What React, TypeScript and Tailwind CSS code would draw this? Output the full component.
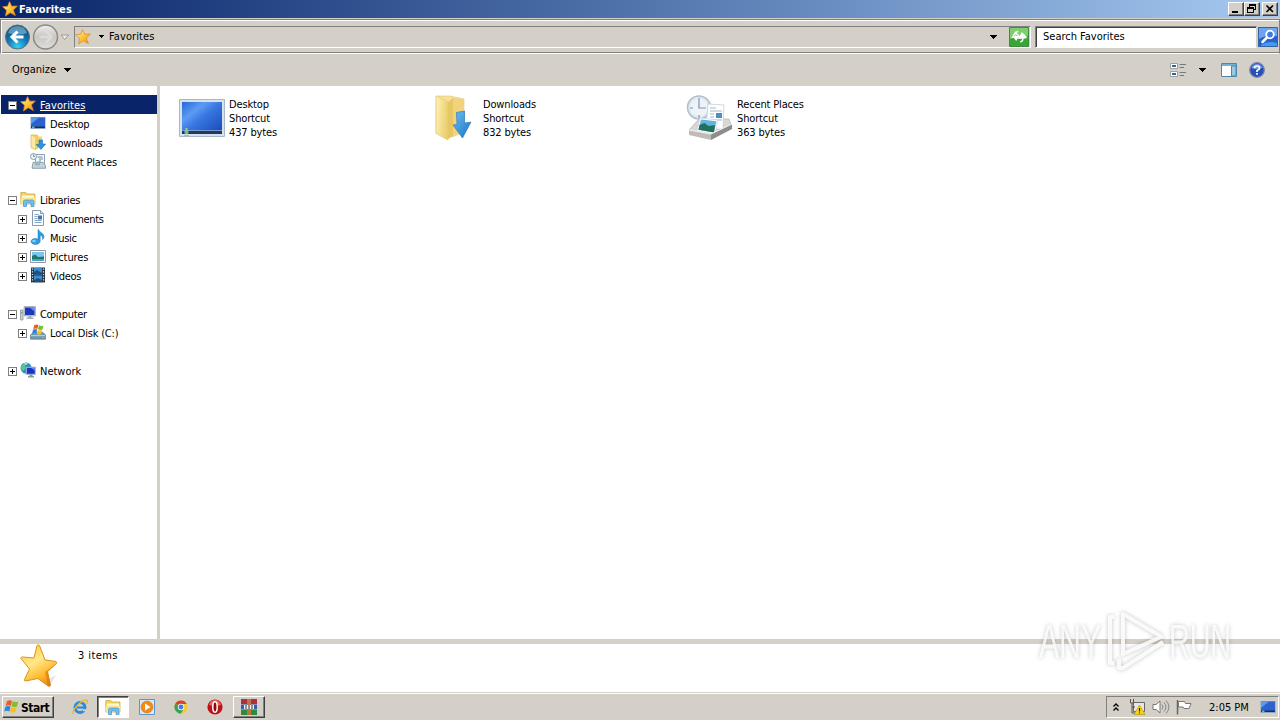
import * as React from "react";

type IconProps = { className?: string };

const Star = ({ className = "size-4" }: IconProps) => (
  <svg viewBox="0 0 16 16" className={className}>
    <defs>
      <linearGradient id="star" x1="0" y1="0" x2="1" y2="1">
        <stop offset="0" stopColor="#fff3a0" />
        <stop offset="0.5" stopColor="#fdc53a" />
        <stop offset="1" stopColor="#ee8a0c" />
      </linearGradient>
    </defs>
    <path d="M7.500.6l2.200 4.600 5.700-.2-4 4 2 5.600-5.200-2.800L3.500 15l1-5.700L.6 5.700l5-.5z" fill="url(#star)" stroke="#df861b" strokeWidth=".7" strokeLinejoin="round" />
  </svg>
);

const BigStar = () => (
  <svg viewBox="0 0 38 44" className="h-11 w-[38px]">
    <defs>
      <linearGradient id="bigstar" x1="0.2" y1="0" x2="0.7" y2="1">
        <stop offset="0" stopColor="#ffc93f" />
        <stop offset="0.4" stopColor="#ffe98a" />
        <stop offset="0.75" stopColor="#fdb92c" />
        <stop offset="1" stopColor="#e8860c" />
      </linearGradient>
    </defs>
    <path d="M27 36l9-5-5 9z" fill="#d5dde6" opacity=".7" />
    <path d="M17 1.500q1.500-1.500 2.500 0l5.500 14.500 11 1.500q1.500.8.5 2L27.500 27.500l3 13.500q-.5 2-2.500 1L18 34.500 5.500 37q-1.500 0-1-1.500L9.500 25 1 14.500Q.5 13 2.500 13L14 14z" fill="url(#bigstar)" stroke="#e08e1b" strokeWidth="1" />
    <path d="M36.500 19.500l-9 8L30.500 41q-.5 2-2.500 1l-3-14z" fill="#d9790c" opacity=".6" />
  </svg>
);

const Screen = ({ className = "size-4" }: IconProps) => (
  <svg viewBox="0 0 16 16" className={className}>
    <path d="M.5 2h15v12H.5z" fill="#8fa5c8" />
    <path d="M1 2.500h14V12H1z" fill="#2b62cf" />
    <path d="M1 2.500h8L1 9z" fill="#5f9aef" />
    <path d="M1 11.500h14V13H1z" fill="#163065" />
    <path d="M2 11.500h2.500V13H2z" fill="#63c66b" />
  </svg>
);

const BigScreen = () => (
  <svg viewBox="0 0 48 42" className="h-[42px] w-12">
    <defs>
      <linearGradient id="screen" x1="0" y1="0" x2="1" y2="1">
        <stop offset="0" stopColor="#2867d6" />
        <stop offset="0.3" stopColor="#5c9bf3" />
        <stop offset="0.5" stopColor="#3777e0" />
        <stop offset="1" stopColor="#1647b5" />
      </linearGradient>
    </defs>
    <path d="M1.500 2.500h45v37h-45z" fill="#d7e1ec" stroke="#a8b8ca" />
    <path d="M4 5h40v32H4z" fill="url(#screen)" />
    <path d="M4 33.500h40V37H4z" fill="#26375c" />
    <path d="M4 33h40v.8H4z" fill="#93b5e6" />
    <circle cx="8.500" cy="35" r="2.200" fill="#74b98a" />
    <path d="M7.500 31h2v3h-2zM6 38h5v1H6z" fill="#8fd08b" />
  </svg>
);

const Downloads = () => (
  <svg viewBox="0 0 16 16" className="size-4">
    <path d="M1 1h6l1 1.500V14l-3 1.500-4-2z" fill="#f1cf65" stroke="#d9b24a" strokeWidth=".7" />
    <path d="M1.500 1.500L5 3.500V15l-3.500-2z" fill="#fbeaa1" />
    <path d="M8 2.500h4V10H8z" fill="#f3d777" />
    <path d="M9 6h3.500v4h3L11 15.500 6.200 10.500H9z" fill="#2c93de" stroke="#1a6cae" strokeWidth=".6" />
  </svg>
);

const BigDownloads = () => (
  <svg viewBox="0 0 40 48" className="ml-px h-12 w-10">
    <defs>
      <linearGradient id="folder" x1="0" y1="0" x2="1" y2="0.3">
        <stop offset="0" stopColor="#fdf2b8" />
        <stop offset="1" stopColor="#ecd070" />
      </linearGradient>
      <linearGradient id="arrow" x1="0" y1="0" x2="1" y2="1">
        <stop offset="0" stopColor="#6fc0f2" />
        <stop offset="1" stopColor="#1673c8" />
      </linearGradient>
    </defs>
    <path d="M3 2h14l14 3v33l-12 5-16-4z" fill="#f6e198" stroke="#dfc470" strokeWidth=".6" />
    <path d="M20 4l11 1.500v32l-11 4z" fill="#f0d37a" />
    <path d="M3 2l12 6v38L3 39.500z" fill="url(#folder)" stroke="#e0c671" strokeWidth=".6" />
    <path d="M15 8l5-4v38l-5 3z" fill="#e7c763" />
    <path d="M23.500 18.500l8-1.500v12l6.500-1-8.500 16L20 31l4-.6z" fill="url(#arrow)" stroke="#2a80c6" strokeWidth=".7" />
  </svg>
);

const Recent = () => (
  <svg viewBox="0 0 16 16" className="size-4">
    <path d="M5.500 1.500h9v10h-9z" fill="#f4f8fb" stroke="#8ea0b0" />
    <path d="M7.500 4h5M9 6h4M9 8h2" stroke="#71899f" />
    <circle cx="3.500" cy="3.500" r="3" fill="#eef4f9" stroke="#8698a8" />
    <path d="M3.500 1.500v2H5" fill="none" stroke="#5c7389" strokeWidth=".8" />
    <path d="M3 9.500h10l2.500 3v2.800H2z" fill="#c8d1d8" stroke="#7f8f9b" strokeWidth=".8" />
    <path d="M5 8.500h5v4H5z" fill="#8fb8d0" />
  </svg>
);

const BigRecent = () => (
  <svg viewBox="0 0 48 48" className="size-12">
    <path d="M3 36L13 25h30l3 8-21 11z" fill="#d8d7d4" stroke="#a9a8a5" strokeWidth=".6" />
    <circle cx="13" cy="13.500" r="11.500" fill="#dfe8f1" stroke="#b4bec8" strokeWidth="1.500" />
    <circle cx="13" cy="13.500" r="9" fill="#edf3f8" />
    <path d="M13 4v10h7M4 14h3M13 24v-3" fill="none" stroke="#8193a8" strokeWidth="1.200" />
    <path d="M22 10l16 1-1 24H20z" fill="#fff" stroke="#c0c6cb" strokeWidth=".7" />
    <path d="M24 14h6M24 17h12M24 20h4M24 23h4M24 26h12" stroke="#a3b4c6" />
    <path d="M30 19h6v5h-6z" fill="#4b8fc9" />
    <path d="M14 24l18 2-3 14-18-3z" fill="#fff" stroke="#c7d2da" strokeWidth=".6" />
    <path d="M15 25.500l15.500 1.700L28 38.500l-15.500-2.700z" fill="#64b4e4" />
    <path d="M13.500 31l5-2 4 3 6.500-1L28 38.500l-15.500-2.700z" fill="#22705c" />
    <path d="M3 36l22 4v6L3 41z" fill="#bdbcb8" />
    <path d="M25 40l21-10v5L25 46z" fill="#8e8d8a" />
    <path d="M3 36l22 4 21-10" fill="none" stroke="#f5f5f3" />
  </svg>
);

const Libraries = () => (
  <svg viewBox="0 0 16 16" className="size-4">
    <path d="M.8 3V1.500h5L7 3h8v10H.8z" fill="#f1d35e" stroke="#c7a43d" strokeWidth=".7" />
    <path d="M2 4.500h12V8H2z" fill="#fff9d6" />
    <path d="M.8 6.500h14.500V13H.8z" fill="#fae792" />
    <path d="M3.500 15.500v-5q0-1.500 1.500-1.500h7.500q1.500 0 1.500 1.500v5h-3V12H6.500v3.500z" fill="#74bde8" stroke="#4293c9" strokeWidth=".7" />
  </svg>
);

const Document = () => (
  <svg viewBox="0 0 16 16" className="size-4">
    <path d="M2.500.5h8l3 3v12h-11z" fill="#fbfdff" stroke="#8799ab" />
    <path d="M10.500.5v3h3" fill="#d8e4ef" stroke="#8799ab" />
    <path d="M4.500 4.500h4M4.500 6.500h3M4.500 8.500h3M4.500 10.500h7M4.500 12.500h7" stroke="#8aa6c3" />
    <path d="M8 5.500h4v4H8z" fill="#3b79b8" />
  </svg>
);

const Music = () => (
  <svg viewBox="0 0 16 16" className="size-4">
    <path d="M8.500.5c.5 3 5.500 3.500 5.500 7 0 1.500-.8 2.500-1.500 3 .3-2.500-.5-3.700-2.300-4.200V12c0 2-2 3.500-4.500 3.500S1 14.200 1 12.500 3 9.500 5 9.500c1 0 2 .2 3 .5V.5z" fill="#2d9de2" stroke="#1b75b4" strokeWidth=".5" />
    <ellipse cx="4" cy="12" rx="1.800" ry="1.200" fill="#85cff5" />
  </svg>
);

const Picture = () => (
  <svg viewBox="0 0 16 16" className="size-4">
    <path d="M.5 2.500h15v12H.5z" fill="#fff" stroke="#8e9aa6" />
    <path d="M2 4h12v9H2z" fill="#7cc6ee" />
    <path d="M2 8l3-1.500L8 9l6-.5V13H2z" fill="#1f7868" />
    <path d="M2 11h12v2H2z" fill="#4aa0c9" />
  </svg>
);

const Video = () => (
  <svg viewBox="0 0 16 16" className="size-4">
    <path d="M1 .5h14v15H1z" fill="#283545" />
    <path d="M4 1h8v6.500H4zM4 8.500h8V15H4z" fill="#3a8fd0" />
    <path d="M4 5l3-2 5 3v1.500H4zM4 13l4-2 4 2v2H4z" fill="#1c5187" />
    <path d="M2.500 1.500v14M13.500 1.500v14" stroke="#d8e4ee" strokeWidth="1.200" strokeDasharray="1.200 1.500" />
  </svg>
);

const Computer = () => (
  <svg viewBox="0 0 16 16" className="size-4">
    <path d="M.5 5h2.500v10H.5z" fill="#cdd3d8" stroke="#7f8a94" strokeWidth=".7" />
    <path d="M1 7h1.500v1.500H1z" fill="#69b845" />
    <path d="M4 1.500h11.500v9.500H4z" fill="#c4cbd8" stroke="#8d96a8" strokeWidth=".6" />
    <path d="M5 2.500h9.500V10H5z" fill="#1c36c0" />
    <path d="M9.500 2.500h5v4z" fill="#6e8df0" />
    <path d="M8.500 11h3v1.500h2V14h-7v-1.500h2z" fill="#a5aeb9" />
  </svg>
);

const WinFlag = () => (
  <>
    <path d="M3.500 1.800C5 .8 6.500.8 8 1.600L6.900 6C5.500 5.200 4 5.200 2.400 6.100z" fill="#f05a28" />
    <path d="M8.600 1.900c1.700.9 3.200 1 5 .2L12.400 6.500c-1.700.8-3.300.6-4.900-.2z" fill="#7fbf2f" />
    <path d="M2.200 6.800c1.600-.9 3-.9 4.500-.1L5.600 11c-1.500-.8-3-.8-4.500.1z" fill="#2a86dc" />
    <path d="M7.300 7c1.600.8 3.200.9 4.900.2L11 11.500c-1.600.8-3.100.7-4.800-.2z" fill="#fbbf1f" />
  </>
);

const Disk = () => (
  <svg viewBox="0 0 16 16" className="size-4">
    <path d="M.5 11L3 8.500h10l2.500 2.500v4.200H.5z" fill="#6f9aae" stroke="#5a7e92" strokeWidth=".7" />
    <path d="M1 11h14v1.200H1z" fill="#b3cedb" />
    <path d="M12.500 13h1.500v1h-1.500z" fill="#74e75a" />
    <g transform="translate(1 -.5) scale(.92)">
      <WinFlag />
    </g>
  </svg>
);

const Network = () => (
  <svg viewBox="0 0 16 16" className="size-4">
    <circle cx="6" cy="6" r="5.500" fill="#2a8fd2" />
    <path d="M2 3c2-2 4-2.500 5-2L5 4l1 2-3 3C1 8 .3 5 2 3z" fill="#59c48c" />
    <path d="M4 1.500Q6 .5 8 1.500L6 3z" fill="#bdebf5" />
    <path d="M6 5h9.500v7.500H6z" fill="#c0cce3" stroke="#7e90b2" strokeWidth=".5" />
    <path d="M6.800 5.800h8v6h-8z" fill="#1734c4" />
    <path d="M11 5.800h3.800v3z" fill="#6887f0" />
    <path d="M9.500 12.500h3V14h1.500v1.500H8V14h1.500z" fill="#8998ad" />
  </svg>
);

const Triangle = () => (
  <svg viewBox="0 0 8 4" className="h-1 w-2" shapeRendering="crispEdges">
    <path d="M0 0h8L4 4z" fill="#000" />
  </svg>
);

const Expander = ({ open }: { open?: boolean }) => (
  <svg viewBox="0 0 9 9" className="size-[9px] shrink-0" shapeRendering="crispEdges">
    <path d="M.5.5h8v8h-8z" fill="#fff" stroke="#808080" />
    <path d={open ? "M2 4.500h5" : "M2 4.500h5M4.500 2v5"} stroke="#000" />
  </svg>
);

type Row = {
  label?: string;
  icon?: React.ReactNode;
  child?: boolean;
  expand?: "open" | "closed";
  selected?: boolean;
  tracking?: string;
};

const rows: Row[] = [
  { label: "Favorites", icon: <Star />, expand: "open", selected: true, tracking: "tracking-[0.1px]" },
  { label: "Desktop", icon: <Screen />, child: true, tracking: "tracking-[-0.2px]" },
  { label: "Downloads", icon: <Downloads />, child: true, tracking: "tracking-[-0.2px]" },
  { label: "Recent Places", icon: <Recent />, child: true, tracking: "tracking-[-0.13px]" },
  {},
  { label: "Libraries", icon: <Libraries />, expand: "open" },
  { label: "Documents", icon: <Document />, child: true, expand: "closed" },
  { label: "Music", icon: <Music />, child: true, expand: "closed" },
  { label: "Pictures", icon: <Picture />, child: true, expand: "closed", tracking: "tracking-[-0.1px]" },
  { label: "Videos", icon: <Video />, child: true, expand: "closed" },
  {},
  { label: "Computer", icon: <Computer />, expand: "open" },
  { label: "Local Disk (C:)", icon: <Disk />, child: true, expand: "closed", tracking: "tracking-[-0.18px]" },
  {},
  { label: "Network", icon: <Network />, expand: "closed", tracking: "tracking-normal" },
];

const files = [
  { name: "Desktop", size: "437 bytes", icon: <BigScreen /> },
  { name: "Downloads", size: "832 bytes", icon: <BigDownloads /> },
  { name: "Recent Places", size: "363 bytes", icon: <BigRecent /> },
];

const raised = "border border-t-white border-l-white border-r-[#404040] border-b-[#404040] shadow-[inset_-1px_-1px_0_#808080] bg-[#d4d0c8]";

function TitleBar() {
  return (
    <header className="flex h-[18px] items-center bg-linear-to-r from-[#0a246a] to-[#a6caf0] pl-0.5 pr-0.5 text-white">
      <Star />
      <span className="ml-px flex-1 pt-0.5 text-[11px] font-bold tracking-[0.15px]">Favorites</span>
      <div className="flex">
        <button className={"flex h-3.5 w-4 items-center justify-center " + raised}>
          <svg viewBox="0 0 16 14" className="h-3.5 w-4 shrink-0" shapeRendering="crispEdges"><path d="M4 9h6v2H4z" /></svg>
        </button>
        <button className={"flex h-3.5 w-4 items-center justify-center " + raised}>
          <svg viewBox="0 0 16 14" className="h-3.5 w-4 shrink-0" shapeRendering="crispEdges">
            <path d="M5.500 5V2.500h6v5H10M5 3.500h7M3.500 5.500h6v5h-6zM3 6.500h7" fill="none" stroke="#000" />
          </svg>
        </button>
        <button className={"ml-0.5 flex h-3.5 w-4 items-center justify-center " + raised}>
          <svg viewBox="0 0 16 14" className="h-3.5 w-4 shrink-0"><path d="M4.500 3.500l6.500 6.500M11 3.500L4.500 10" stroke="#000" strokeWidth="1.600" /></svg>
        </button>
      </div>
    </header>
  );
}

function NavBar() {
  return (
    <div className="mt-px flex h-[35px] items-center border border-[#808080] border-b-white pl-1 pr-px shadow-[inset_1px_1px_0_#fff,inset_0_-1px_0_#808080]">
      <svg viewBox="0 0 64 28" className="h-7 w-16">
        <defs>
          <radialGradient id="back" cx=".5" cy=".9" r=".9">
            <stop offset="0" stopColor="#35d0f5" />
            <stop offset=".45" stopColor="#167cba" />
            <stop offset="1" stopColor="#0b466f" />
          </radialGradient>
          <linearGradient id="fwd" x1="0" y1="0" x2="0" y2="1">
            <stop offset="0" stopColor="#eeeeed" />
            <stop offset=".5" stopColor="#c8c6c3" />
            <stop offset="1" stopColor="#e2e0dd" />
          </linearGradient>
        </defs>
        <circle cx="12.500" cy="14" r="12" fill="url(#back)" stroke="#54738a" />
        <path d="M3 10q2-7 9.500-7T22 10q-9 3-19 0z" fill="#a8d3e8" opacity=".5" />
        <path d="M18.500 14H8M12.500 8.500L7 14l5.500 5.500" fill="none" stroke="#fff" strokeWidth="3" />
        <circle cx="40.500" cy="14" r="12" fill="url(#fwd)" stroke="#8c8a87" strokeWidth="1.500" />
        <path d="M34.500 14H45M41 8.500l5.500 5.500-5.500 5.500" fill="none" stroke="#dddbd8" strokeWidth="2.500" />
        <path d="M56 12h7.500L59.800 16.500z" fill="#eee" stroke="#8a8885" strokeWidth=".8" />
      </svg>
      <div className="ml-[5px] flex h-[22px] w-[957px] items-center border border-[#808080] border-b-white border-r-white pr-[33px]">
        <Star />
        <svg viewBox="0 0 6 3" className="ml-[7px] h-[3px] w-1.5" shapeRendering="crispEdges"><path d="M0 0h6L3 3z" /></svg>
        <span className="ml-[5px] flex-1 pt-px tracking-[0.1px]">Favorites</span>
        <Triangle />
      </div>
      <svg viewBox="0 0 20 20" className="-ml-[22px] size-5">
        <path d="M.5.500h19v19H.5z" fill="#36a635" stroke="#468a48" />
        <path d="M1 1h18v8Q10 6 1 12z" fill="#7bcf6c" />
        <path d="M7 13V8M3.500 9.500L7 5l3.500 4.500zM7 7q0-2.500 3-2.500M13.500 7v5M10 11h7l-3.500-4.500zM13.500 12q0 3-3 3" fill="none" stroke="#fff" strokeWidth="1.400" transform="rotate(-8 10 10)" />
        <path d="M3 9l4 4.500L11 9zM9.500 11.500l4-4.500 4 4.500z" fill="#fff" />
      </svg>
      <div className="ml-[6px] flex h-[22px] flex-1 items-center border border-[#808080] border-b-white border-r-[#d4d0c8] bg-white pl-[7px] shadow-[inset_1px_1px_0_#404040]">
        <span className="pt-px tracking-normal">Search Favorites</span>
      </div>
      <svg viewBox="0 0 20 20" className="ml-px size-5">
        <path d="M.5.500h19v19H.5z" fill="#2860d4" stroke="#3561ad" />
        <path d="M1 1h18v8Q8 8 1 12z" fill="#6ca4f2" />
        <path d="M3 18Q10 13 19 16v3H3z" fill="#47b8f0" opacity=".7" />
        <circle cx="12" cy="7.500" r="3.800" fill="#4179de" stroke="#fff" strokeWidth="1.800" />
        <path d="M9 10.500L4.500 15" stroke="#fff" strokeWidth="2.500" strokeLinecap="round" />
      </svg>
    </div>
  );
}

function CommandBar() {
  return (
    <div className="flex h-[31px] items-center pb-px pl-3 pr-[15px]">
      <span className="w-[51px] tracking-[-0.05px]">Organize</span>
      <Triangle />
      <svg viewBox="0 0 16 16" className="ml-auto size-4">
        <path d="M.5 1.500h7v5h-7zM.5 9.500h7v5h-7z" fill="#fff" stroke="#9aa1a8" />
        <path d="M2 3h4v2H2zM2 11h4v2H2z" fill="#38648d" />
        <path d="M9.500 2.500H16M9.500 5.500H14M9.500 10.500H16M9.500 13.500H14" stroke="#737b82" />
      </svg>
      <span className="ml-3"><Triangle /></span>
      <svg viewBox="0 0 16 14" className="ml-[15px] h-3.5 w-4">
        <path d="M.5.500h15v13H.5z" fill="#fff" stroke="#4d88ac" />
        <path d="M1 1h14v2H1z" fill="#76b1d1" />
        <path d="M10.500 3h4.500v10h-4.500z" fill="#9acbe3" stroke="#4d88ac" />
      </svg>
      <svg viewBox="0 0 16 16" className="ml-3 size-4">
        <circle cx="8" cy="8" r="7.300" fill="#2850b8" stroke="#7385b2" strokeWidth="1.200" />
        <path d="M2.500 6Q4 2 8 2t5.500 4Q8 8 2.500 6z" fill="#7499e5" />
        <path d="M5.500 6.200Q5.500 4 8 4t2.500 2.200Q10.500 7.500 8 8.500V10M8 11v1.800" fill="none" stroke="#fff" strokeWidth="1.700" />
      </svg>
    </div>
  );
}

function Sidebar() {
  return (
    <nav className="w-[157px] bg-white pt-[9px]">
      {rows.map((row, i) => (
        <div key={i} className={"ml-px flex h-[19px] items-center pt-0.5 " + (row.selected ? "bg-[#0a246a] text-white" : "")}>
          {row.label && (
            <>
              <span className={"flex shrink-0 " + (row.child ? "w-[29px] pl-[17px]" : "w-[19px] pl-[7px]")}>
                {row.expand && <Expander open={row.expand === "open"} />}
              </span>
              <span className="-mt-1">{row.icon}</span>
              <span className={"ml-1 " + (row.tracking || "") + (row.selected ? " underline underline-offset-1" : "")}>{row.label}</span>
            </>
          )}
        </div>
      ))}
    </nav>
  );
}

function Watermark() {
  return (
    <svg viewBox="0 0 210 76" className="pointer-events-none absolute left-[1030px] top-[602px] h-[76px] w-[210px] drop-shadow-[0_0_2px_rgba(0,0,0,0.28)]">
      <g fill="#fff" fillOpacity=".8" fontFamily="Liberation Sans" fontSize="48">
        <text x="9" y="56" textLength="62" lengthAdjust="spacingAndGlyphs">ANY</text>
        <text x="139" y="56" textLength="62" lengthAdjust="spacingAndGlyphs">RUN</text>
      </g>
      <path d="M84 15h-4v46h4M93 50V12l39 23M93 12v40l40-18M89 57v9h4l40-26" fill="none" stroke="#fff" strokeOpacity=".85" strokeWidth="4" strokeLinejoin="round" />
    </svg>
  );
}

function Taskbar() {
  return (
    <footer className="flex h-[27px] items-center border-t border-white pl-0.5">
      <button className={"flex h-[22px] w-[52px] items-center " + raised}>
        <svg viewBox="0 0 16 14" className="h-4 w-[18px] shrink-0"><WinFlag /></svg>
        <span className="pt-px text-[12px] font-bold leading-none tracking-[-0.5px]">Start</span>
      </button>
      <svg viewBox="0 0 16 16" className="ml-[18px] size-4">
        <circle cx="8" cy="8.500" r="5" fill="none" stroke="#2a8bdb" strokeWidth="3" />
        <path d="M5 8.500h8" stroke="#2a8bdb" strokeWidth="2.200" />
        <path d="M11 10.200h4v2h-4z" fill="#d4d0c8" />
        <path d="M1.500 15C-1 12 9 1 14 1q2.500.5.500 4" fill="none" stroke="#efb72b" strokeWidth="1.400" />
      </svg>
      <div className="ml-[9px] flex h-[22px] w-8 items-center justify-center border border-[#404040] border-b-white border-r-white bg-white shadow-[inset_1px_1px_0_#808080]">
        <Libraries />
      </div>
      <svg viewBox="0 0 16 16" className="ml-[10px] size-4">
        <path d="M.5.500h15v15H.5z" fill="#d8eaf6" stroke="#5b98c9" />
        <circle cx="8" cy="8" r="6" fill="#f28a19" stroke="#cf6a0d" strokeWidth=".5" />
        <path d="M6 4.500l5.500 3.500L6 11.500z" fill="#fff" />
      </svg>
      <svg viewBox="0 0 16 16" className="ml-[19px] size-3.5">
        <circle cx="8" cy="8" r="7.500" fill="#fbc92f" />
        <path d="M8 8L1.500 4.300A7.500 7.500 0 0 1 14.500 4.500H8z" fill="#df3e31" />
        <path d="M1.500 4.300A7.500 7.500 0 0 0 8 15.500l3-5.500L8 8z" fill="#35a252" />
        <circle cx="8" cy="8" r="3.700" fill="#f5f5f5" />
        <circle cx="8" cy="8" r="2.800" fill="#3b7ded" />
      </svg>
      <svg viewBox="0 0 16 16" className="ml-[19px] size-4">
        <circle cx="8" cy="8" r="7.600" fill="#bd1218" />
        <path d="M2 6Q3.500 1 8 1t6 5Q8 8 2 6z" fill="#e76361" />
        <ellipse cx="8" cy="8" rx="2.200" ry="5.200" fill="#8e080d" stroke="#fff" strokeWidth="1.500" />
      </svg>
      <div className={"ml-[10px] flex h-[22px] w-8 items-center justify-center " + raised}>
        <svg viewBox="0 0 16 16" className="size-4">
          <path d="M0 0h16v5H0z" fill="#b02f3c" />
          <path d="M0 5.500h16v5H0z" fill="#3958b8" />
          <path d="M0 11h16v5H0z" fill="#2e8b3b" />
          <path d="M6 0h4v16H6z" fill="#bd7541" />
          <path d="M3 6h10v4H3z" fill="#eee" />
          <path d="M5 6v4M8 6v4M11 6v4" stroke="#333" />
        </svg>
      </div>
      <div className="ml-auto mr-px flex h-[22px] w-[173px] items-center border border-[#808080] border-b-white border-r-white pl-1.5">
        <svg viewBox="0 0 6 9" className="h-[9px] w-1.5"><path d="M.5 3.500L3 1l2.500 2.500M.5 7.500L3 5l2.500 2.500" fill="none" stroke="#000" strokeWidth="1.300" /></svg>
        <svg viewBox="0 0 16 16" className="ml-[10px] size-4">
          <path d="M4.500 3.500h11v9h-11z" fill="#e8e6e1" stroke="#666" />
          <path d="M1.500 0v4h3V0M3 4v10h4M3 8h3" fill="none" stroke="#555" />
          <path d="M10.500 6l5.500 9.500H5z" fill="#f8d810" stroke="#a98c09" strokeWidth=".6" />
          <path d="M10.500 9v3.500M10.500 13.500v1" stroke="#222" strokeWidth="1.200" />
        </svg>
        <svg viewBox="0 0 18 16" className="ml-[7px] h-4 w-[18px]">
          <path d="M1 5.500h3L8 2v12l-4-3.500H1z" fill="#fff" stroke="#777" />
          <path d="M10 5.500q2 2.500 0 5M12 3.500q4 4.500 0 9M14 1.500q6 6.500 0 13" fill="none" stroke="#888" />
        </svg>
        <svg viewBox="0 0 16 16" className="ml-1.5 size-4">
          <path d="M1.500 1v14.500" stroke="#666" strokeWidth="1.500" />
          <path d="M2.500 2.500h6l1 2H15l-2 5H8l-1-1.500H2.500z" fill="#fff" stroke="#777" />
        </svg>
        <span className="ml-[17px] w-[51px] whitespace-nowrap pt-px tracking-normal">2:05 PM</span>
        <Screen />
      </div>
    </footer>
  );
}

export default function App() {
  return (
    <div className="relative flex h-[720px] w-[1280px] flex-col overflow-hidden bg-[#d4d0c8] font-['DejaVu_Sans_Condensed','DejaVu_Sans',sans-serif] text-[11px] leading-[14px] tracking-[-0.3px] text-black">
      <TitleBar />
      <NavBar />
      <div className="h-px" />
      <CommandBar />
      <div className="flex h-[553px]">
        <Sidebar />
        <main className="ml-[3px] flex flex-1 items-start bg-white pl-[18px] pt-2">
          {files.map((file) => (
            <div key={file.name} className="flex w-[254px] items-start">
              <div className="flex h-12 w-[51px] items-center">{file.icon}</div>
              <div className="pt-1 tracking-[-0.15px]">
                <p>{file.name}</p>
                <p>Shortcut</p>
                <p>{file.size}</p>
              </div>
            </div>
          ))}
        </main>
      </div>
      <section className="mt-[5px] flex h-12 items-start bg-white pl-5">
        <BigStar />
        <p className="ml-5 mt-[5px] tracking-[0.4px]">3 items</p>
      </section>
      <div className="h-px" />
      <Taskbar />
      <Watermark />
    </div>
  );
}
